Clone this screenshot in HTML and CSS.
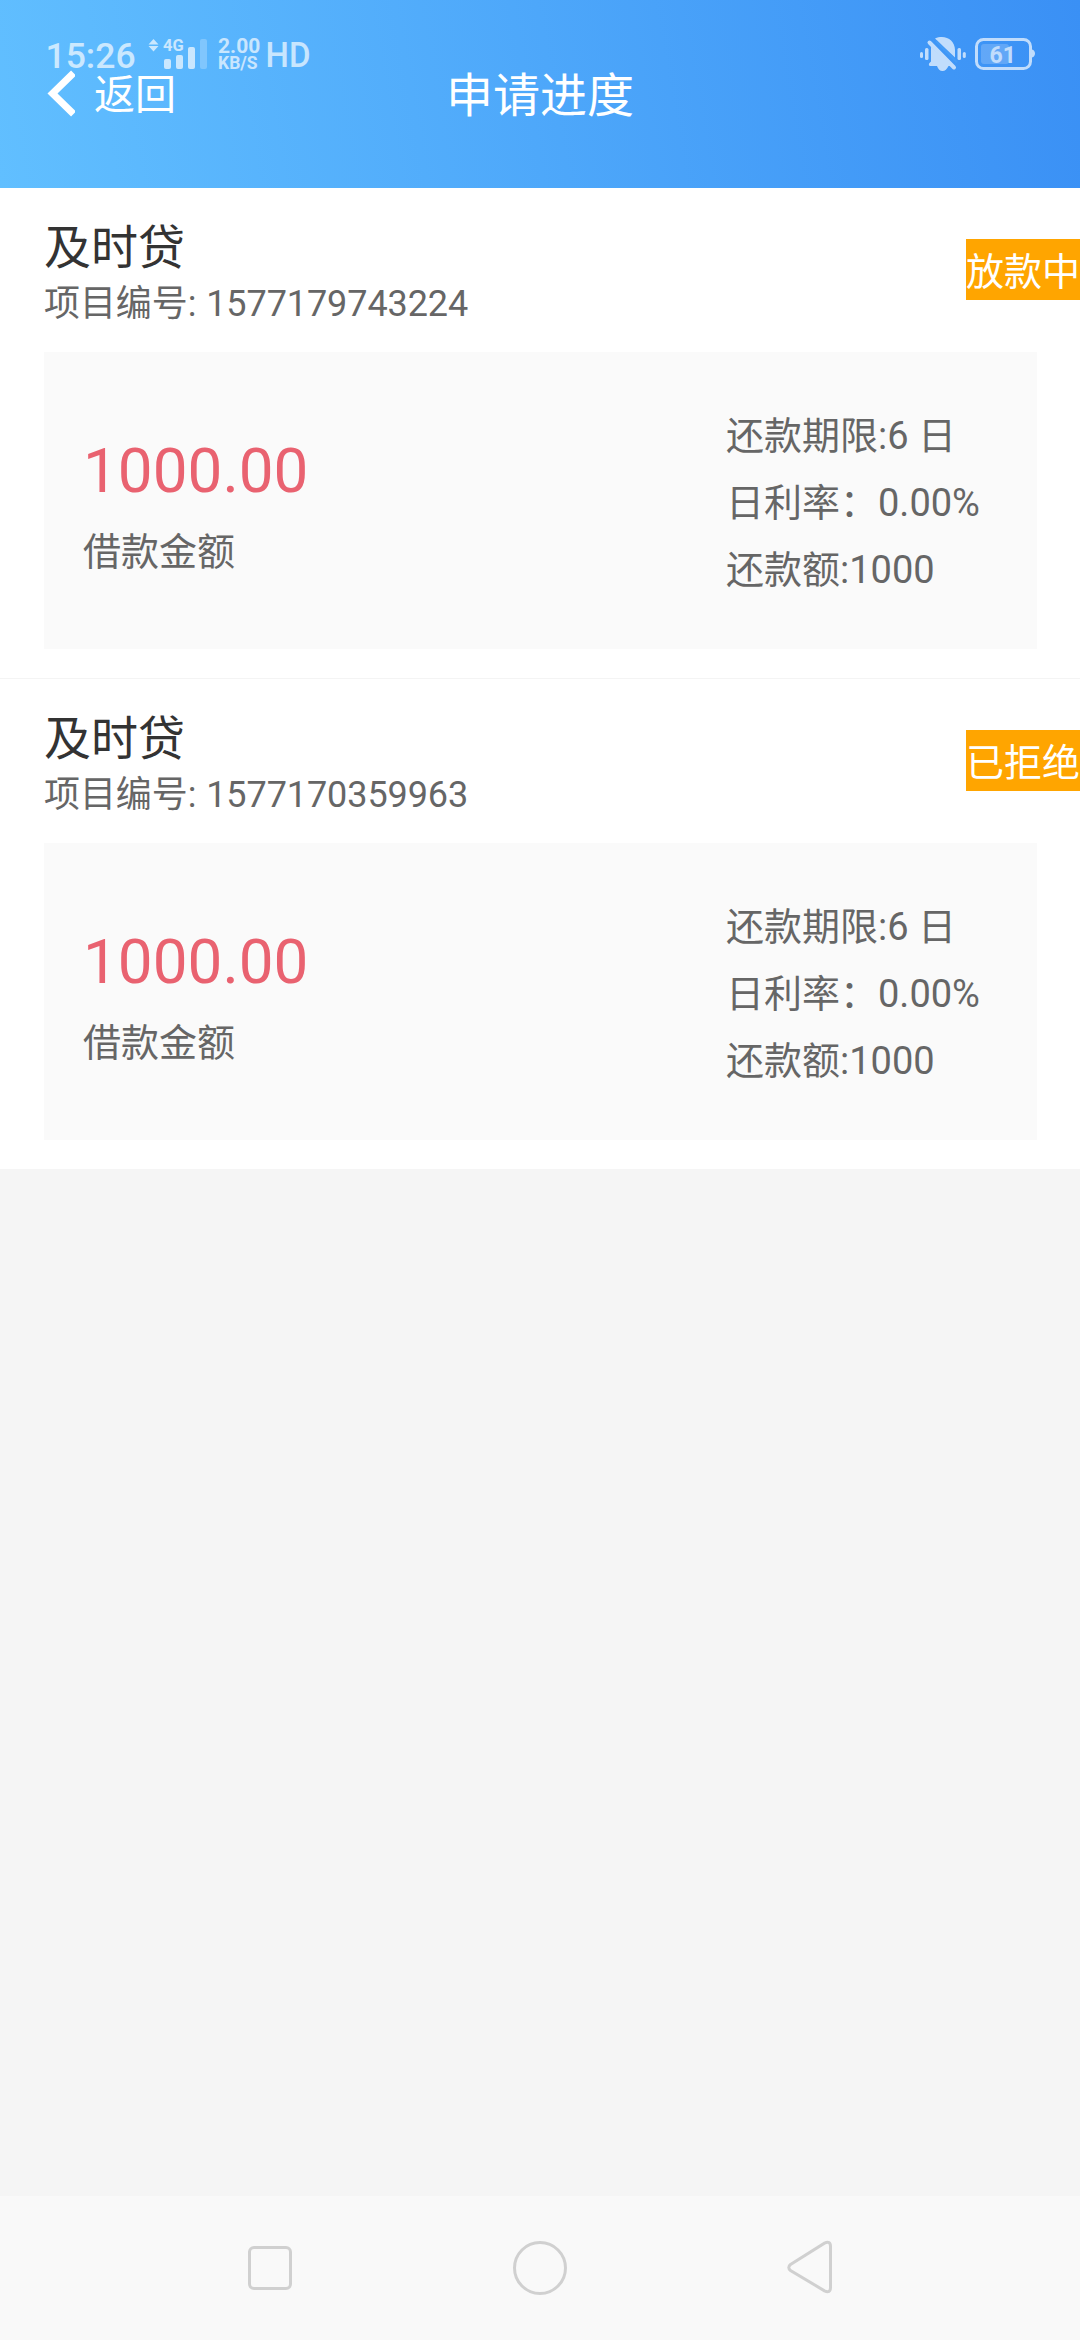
FILE: index.html
```html
<!DOCTYPE html>
<html lang="zh-CN">
<head>
<meta charset="utf-8">
<title>申请进度</title>
<link rel="stylesheet" href="styles.css">
</head>
<body>
<div class="screen">
  <header class="header">
    <a class="back">
      <svg class="chevron" width="30" height="48" viewBox="0 0 30 48"><path d="M28.500 3 L7.500 23.500 L28.500 44" fill="none" stroke="#fff" stroke-width="7"/></svg>
      <span>返回</span>
    </a>
    <h1 class="title">申请进度</h1>
    <svg class="status" width="1080" height="80" viewBox="0 0 1080 80">
      <g class="status-ink">
        <text x="45.500" y="68" font-size="35.500" class="medium">15:26</text>
        <path d="M153.500 39l5 5.500h-10zM153.500 51.500l5-5.500h-10z"/>
        <text x="163" y="51" font-size="16.500" class="bold">4G</text>
        <rect x="164" y="59" width="7" height="10" rx="2"/>
        <rect x="176" y="55" width="7" height="14" rx="2"/>
        <rect x="188" y="47" width="7" height="22" rx="2"/>
        <rect x="200" y="39" width="7" height="30" rx="2" opacity=".35"/>
        <text x="218" y="53" font-size="21" class="bold">2.00</text>
        <text x="218" y="69" font-size="17.500" class="bold">KB/S</text>
        <text x="265.500" y="67" font-size="35" class="medium" textLength="45" lengthAdjust="spacingAndGlyphs">HD</text>
        <rect x="920" y="52" width="3" height="6" rx="1.500"/>
        <rect x="925" y="48" width="3.500" height="12" rx="1.500"/>
        <rect x="957.500" y="48" width="3.500" height="12" rx="1.500"/>
        <rect x="962.800" y="52" width="3" height="6" rx="1.500"/>
        <path d="M935 38.500C945 34 955 40 955 50V57.500ZM931 46.500L951 66H948.500C947 69 945 71 942.500 71S938 69 937 66H930.500C928.500 66 928.500 63.500 930 62.500L931 61.500Z"/>
        <path d="M929.500 42.500L954 67.500" fill="none" stroke="#fff" stroke-width="4" stroke-linecap="round"/>
        <path class="slash" d="M936 41L957 62.500" />
        <rect x="976.500" y="39.500" width="54" height="29" rx="7" fill="none" stroke="#fff" stroke-width="3"/>
        <path d="M1032 49.500c4 1 4 7 0 8z"/>
        <rect x="981" y="44" width="28" height="20" rx="3" opacity=".28"/>
        <text x="989.500" y="62.500" font-size="23" class="bold">61</text>
      </g>
    </svg>
  </header>
  <main class="list">
    <section class="item">
      <div class="head">
        <div>
          <h2 class="name">及时贷</h2>
          <p class="number">项目编号: 1577179743224</p>
        </div>
        <span class="badge">放款中</span>
      </div>
      <div class="card">
        <div class="sum">
          <div class="amount">1000.00</div>
          <div class="label">借款金额</div>
        </div>
        <ul class="terms">
          <li>还款期限:6 日</li>
          <li>日利率：0.00%</li>
          <li>还款额:1000</li>
        </ul>
      </div>
    </section>
    <section class="item">
      <div class="head">
        <div>
          <h2 class="name">及时贷</h2>
          <p class="number">项目编号: 1577170359963</p>
        </div>
        <span class="badge">已拒绝</span>
      </div>
      <div class="card">
        <div class="sum">
          <div class="amount">1000.00</div>
          <div class="label">借款金额</div>
        </div>
        <ul class="terms">
          <li>还款期限:6 日</li>
          <li>日利率：0.00%</li>
          <li>还款额:1000</li>
        </ul>
      </div>
    </section>
  </main>
  <nav class="nav">
    <svg width="60" height="60" viewBox="0 0 60 60"><rect x="9.500" y="9.500" width="41" height="41" rx="4.500"/></svg>
    <svg width="60" height="60" viewBox="0 0 60 60"><circle cx="30" cy="30" r="25.500"/></svg>
    <svg width="60" height="60" viewBox="0 0 60 60"><path d="M10.500 26.500L44.500 5.200Q50.500 2.500 50.500 8.500V49.500Q50.500 55.500 44.500 52.800L10.500 32.500Q7 29.500 10.500 26.500Z"/></svg>
  </nav>
</div>
</body>
</html>
```
FILE: styles.css
```css
* { box-sizing: border-box; margin: 0; padding: 0; }

body {
  font-family: Roboto, "Noto Sans CJK SC", sans-serif;
  background: #f5f5f5;
  color: #666;
}

.screen {
  display: flex;
  flex-direction: column;
  width: 1080px;
  height: 2340px;
}

.header {
  position: relative;
  display: grid;
  grid-template-columns: 1fr auto 1fr;
  align-items: start;
  height: 188px;
  padding: 68px 45px 0;
  background: linear-gradient(80deg, #61bfff, #3a90f5);
  color: #fff;
}

.back { display: flex; align-items: flex-start; gap: 19px; font-size: 41px; line-height: 56px; }
.back span { height: 56px; margin-top: -1px; }
.chevron { display: block; margin-top: 2px; }
.title { font-size: 47px; font-weight: 400; line-height: 56px; }

.status { position: absolute; left: 0; top: 0; }
.status-ink { fill: #fff; opacity: .68; }
.slash { fill: none; stroke: #48a0f8; stroke-width: 2; }
.medium { font-weight: 500; }
.bold { font-weight: 700; }

.list { flex: 1; }
.item { padding: 28px 0 29px 44px; background: #fff; }
.item + .item { border-top: 1px solid #f4f4f4; }

.head { display: flex; justify-content: space-between; height: 136px; padding-top: 4px; }
.name { color: #333; font-size: 47px; font-weight: 400; line-height: 56px; }
.number { font-size: 36px; line-height: 56px; word-spacing: 1px; letter-spacing: -.08px; }

.badge {
  width: 114px;
  height: 61px;
  margin-top: 19px;
  padding-top: 3px;
  background: #ffa500;
  color: #fff;
  font-size: 38px;
  line-height: 61px;
  white-space: nowrap;
}

.card {
  display: flex;
  justify-content: space-between;
  width: 993px;
  height: 297px;
  background: #fafafa;
}

.sum { padding: 79px 0 0 39px; }
.amount { color: #e96270; font-size: 62px; line-height: 80px; }
.label { margin-top: 13px; font-size: 38px; line-height: 56px; }

.terms { width: 311px; padding-top: 51px; list-style: none; font-size: 38px; line-height: 67px; white-space: nowrap; }

.nav {
  display: flex;
  justify-content: center;
  gap: 210px;
  height: 144px;
  padding-top: 42px;
  background: #f9f9f9;
}
.nav svg { fill: none; stroke: #d0d0d0; stroke-width: 3; }
```
